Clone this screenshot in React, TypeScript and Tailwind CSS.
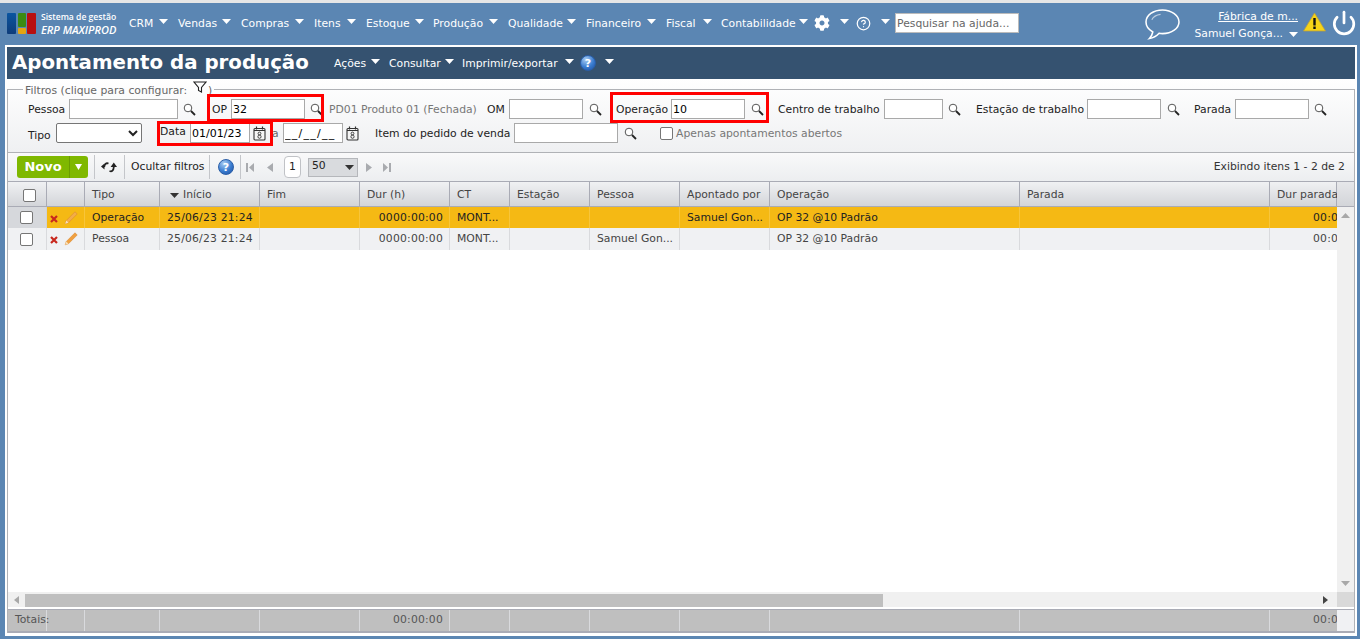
import React from "react";
import { FaCog } from "react-icons/fa";
import { CircleHelp, Power } from "lucide-react";

const Caret = ({ className = "" }: { className?: string }) => (
  <svg width="9" height="5" viewBox="0 0 9 5" className={"shrink-0 " + className}>
    <polygon points="0,0 9,0 4.5,5" fill="#ffffff" />
  </svg>
);

const Search = ({ className = "" }: { className?: string }) => (
  <svg width="13" height="13" viewBox="0 0 13 13" className={"shrink-0 " + className} fill="none">
    <circle cx="5" cy="5" r="3.8" stroke="#555" strokeWidth="1" fill="#fff" />
    <path d="M8 8l4 4" stroke="#222" strokeWidth="1.8" />
  </svg>
);

const Calendar = ({ className = "" }: { className?: string }) => (
  <svg width="13" height="15" viewBox="0 0 13 15" className={"shrink-0 " + className} fill="none">
    <rect x="1" y="2.5" width="11" height="11.5" rx="1" stroke="#333" strokeWidth="1.1" fill="#f5f5f5" />
    <path d="M3.5 0.5v3M9.5 0.5v3" stroke="#333" strokeWidth="1.2" />
    <path d="M1 4.5h11" stroke="#333" />
    <circle cx="6.5" cy="7.5" r="1.4" stroke="#333" strokeWidth="0.9" />
    <circle cx="6.5" cy="10.7" r="1.6" stroke="#333" strokeWidth="0.9" />
  </svg>
);

const HelpBlue = ({ className = "" }: { className?: string }) => (
  <span className={"flex h-4 w-4 shrink-0 items-center justify-center rounded-full border border-[#2a5ea8] bg-[radial-gradient(circle_at_35%_25%,#a9cdf3,#3a7cd0_55%,#1e4f9e)] text-[11px] font-bold leading-none text-white " + className}>
    ?
  </span>
);

const Input = ({ w, value = "" }: { w: string; value?: string }) => (
  <input
    readOnly
    value={value}
    className={"h-5 shrink-0 border border-[#a9a9a9] bg-white px-[1px] text-[11px] text-black outline-none " + w}
  />
);

const Red = ({ className }: { className: string }) => (
  <i className={"pointer-events-none absolute border-[3px] border-[#ff0000] " + className} />
);

const nav: [string, string][] = [
  ["CRM", "w-[49px] pr-[10px]"],
  ["Vendas", "w-[63px] pr-[10px]"],
  ["Compras", "w-[73px] pr-[10px]"],
  ["Itens", "w-[52px] pr-[10px]"],
  ["Estoque", "w-[67px] pr-[9px]"],
  ["Produção", "w-[75px] pr-[10px]"],
  ["Qualidade", "w-[78px] pr-[10px]"],
  ["Financeiro", "w-[80px] pr-[10px]"],
  ["Fiscal", "w-[55px] pr-[9px]"],
  ["Contabilidade", "w-[93px] pr-[6px]"],
];

type Col = { w: string; label: string };
const cols: Col[] = [
  { w: "w-[39px]", label: "" },
  { w: "w-[38px]", label: "" },
  { w: "w-[75px]", label: "Tipo" },
  { w: "w-[100px]", label: "Início" },
  { w: "w-[100px]", label: "Fim" },
  { w: "w-[90px]", label: "Dur (h)" },
  { w: "w-[60px]", label: "CT" },
  { w: "w-[80px]", label: "Estação" },
  { w: "w-[90px]", label: "Pessoa" },
  { w: "w-[90px]", label: "Apontado por" },
  { w: "w-[250px]", label: "Operação" },
  { w: "w-[250px]", label: "Parada" },
  { w: "w-[67px]", label: "Dur parada" },
];

const Check = ({ className = "" }: { className?: string }) => (
  <span className={"block h-[13px] w-[13px] shrink-0 rounded-[2px] border border-[#767676] bg-white " + className} />
);

const XIcon = () => (
  <svg width="8" height="8" viewBox="0 0 8 8" className="mt-[2px] shrink-0">
    <path d="M1 1l6 6M7 1l-6 6" stroke="#c8281e" strokeWidth="2.2" />
  </svg>
);

const Pencil = ({ faded = false }: { faded?: boolean }) => (
  <svg width="14" height="14" viewBox="0 0 14 14" className="ml-[6px] shrink-0">
    <path d="M11 0.8l2.200 2.200-8.700 8.700-3.300 1.100 1.100-3.300z" fill={faded ? "#f3ad48" : "#f0a040"} stroke="#dc8a30" strokeWidth="0.6" />
    <path d="M1.200 12.800l1.100-3.300 2.200 2.200z" fill="#f6e0b8" />
  </svg>
);

const Row = ({ sel, tipo, pessoa, apont }: { sel: boolean; tipo: string; pessoa: string; apont: string }) => {
  const cell = "h-full shrink-0 overflow-hidden whitespace-nowrap border-r " + (sel ? "border-[#f8c53a]" : "border-[#d9dadd]");
  return (
    <div className={"flex items-center leading-[21px] " + (sel ? "h-[21px] bg-[#f5b914] text-[#222]" : "h-[22px] bg-[#f0f1f3] text-[#444]")}>
      <div className={"flex h-full w-[39px] shrink-0 items-center pl-[12px] border-r " + (sel ? "border-[#d0d2d6] bg-[#d6d8dc]" : "border-[#d9dadd] bg-[#f0f1f3]")}>
        <Check />
      </div>
      <div className={"flex w-[38px] items-center pl-[3px] " + cell}>
        <XIcon />
        <Pencil faded={sel} />
      </div>
      <div className={"w-[75px] pl-[7px] " + cell}>{tipo}</div>
      <div className={"w-[100px] pl-[7px] tracking-[0.2px] " + cell}>25/06/23 21:24</div>
      <div className={"w-[100px] " + cell} />
      <div className={"w-[90px] pr-[6px] text-right tracking-[0.2px] " + cell}>0000:00:00</div>
      <div className={"w-[60px] pl-[7px] " + cell}>MONT...</div>
      <div className={"w-[80px] " + cell} />
      <div className={"w-[90px] pl-[7px] " + cell}>{pessoa}</div>
      <div className={"w-[90px] pl-[7px] " + cell}>{apont}</div>
      <div className={"w-[250px] pl-[7px] " + cell}>OP 32 @10 Padrão</div>
      <div className={"w-[250px] " + cell} />
      <div className="h-full w-[67px] shrink-0 overflow-hidden whitespace-nowrap pl-[43px] tracking-[0.2px]">00:00:00</div>
    </div>
  );
};

export default function App() {
  return (
    <div className="flex h-[639px] w-full flex-col overflow-hidden bg-[#5b86b3] text-[10.8px] text-[#222] [font-family:'DejaVu_Sans',sans-serif]">
      <div className="h-[3px] shrink-0 bg-[#e6e6e6]" />
      {/* Top bar */}
      <header className="flex h-[42px] shrink-0 items-center pb-[2px] text-white">
        <div className="ml-[7px] flex h-[21px] shrink-0">
          <div className="w-[9px] rounded-[1px] bg-gradient-to-b from-[#0a55a0] to-[#0e3c7a]" />
          <div className="ml-[2px] flex w-[8px] flex-col gap-[1px]">
            <div className="flex-1 rounded-[1px] bg-[#3c8a12]" />
            <div className="h-[6px] rounded-[1px] bg-[#e4a412]" />
          </div>
          <div className="ml-[1px] w-[9px] rounded-[1px] bg-[#b80f0f]" />
        </div>
        <div className="ml-[5px] w-[88px] shrink-0 leading-none">
          <div className="whitespace-nowrap text-[8.6px] leading-[12px] font-semibold [font-family:'Open_Sans',sans-serif]">Sistema de gestão</div>
          <div className="whitespace-nowrap text-[11px] leading-[13px] font-semibold italic [font-family:'Open_Sans',sans-serif]">ERP MAXIPROD</div>
        </div>
        <div className="flex items-center">
          {nav.map(([t, m]) => (
            <div key={t} className={"flex shrink-0 items-center justify-between " + m}>
              <span className="mt-[2px] whitespace-nowrap">{t}</span>
              <Caret className="-mt-[3px]" />
            </div>
          ))}
        </div>
        <FaCog size={16} className="shrink-0" />
        <Caret className="ml-[10px] -mt-[3px]" />
        <CircleHelp size={15} strokeWidth={2} className="ml-[7px] shrink-0" />
        <Caret className="ml-[10px] -mt-[3px]" />
        <input
          readOnly
          placeholder="Pesquisar na ajuda..."
          className="ml-[5px] h-[20px] w-[124px] shrink-0 border border-[#bbb] bg-white pl-[1px] text-[10.8px] text-[#555] outline-none placeholder:text-[#666]"
        />
        <svg width="37" height="33" viewBox="0 0 38 34" fill="none" className="ml-[125px] mt-[2px] shrink-0">
          <path d="M19 2C9.5 2 2 7.5 2 14.5c0 4.5 3 8 7 10.2-.5 2.500-1.700 5-3.500 6.800 4-.6 7.500-2.700 10-5.400 1.100.2 2.300.3 3.500.3 9.500 0 17-5.500 17-12S28.500 2 19 2z" stroke="#fff" strokeWidth="1.600" />
          <path d="M8 12c1.500-3 5-5 9-5.500" stroke="#fff" strokeOpacity="0.6" strokeWidth="1.200" />
        </svg>
        <div className="ml-[14px] mt-[6px] flex w-[103px] shrink-0 flex-col items-end leading-none">
          <span className="whitespace-nowrap underline">Fábrica de m...</span>
          <div className="mt-[6px] flex items-center">
            <span className="whitespace-nowrap">Samuel Gonça...</span>
            <Caret className="ml-[6px]" />
          </div>
        </div>
        <svg width="23" height="20" viewBox="0 0 23 20" className="ml-[5px] -mt-[3px] shrink-0">
          <polygon points="11.500,1 22.500,19 0.500,19" fill="#f7d417" stroke="#b9a040" strokeWidth="0.800" />
          <rect x="10.300" y="6" width="2.400" height="7.500" fill="#111" />
          <rect x="10.300" y="14.500" width="2.400" height="2.500" fill="#111" />
        </svg>
        <Power size={26} strokeWidth={2.5} className="ml-[5px] -mt-[1px] shrink-0" />
      </header>

      {/* Page */}
      <main className="ml-[5px] mr-[3px] mb-[3px] flex min-h-0 flex-1 flex-col bg-white px-[2px] pt-[2px] pb-[3px]">
        <div className="flex h-[32px] shrink-0 items-center bg-[#355270] text-white">
          <h1 className="ml-[5px] w-[297px] shrink-0 whitespace-nowrap text-[19.8px] font-bold leading-none">Apontamento da produção</h1>
          <span className="ml-[25px] mt-[2px] w-[32px] shrink-0">Ações</span>
          <Caret className="ml-[5px] -mt-[3px]" />
          <span className="ml-[9px] mt-[2px] w-[51px] shrink-0">Consultar</span>
          <Caret className="ml-[5px] -mt-[3px]" />
          <span className="ml-[8px] mt-[2px] w-[98px] shrink-0 whitespace-nowrap">Imprimir/exportar</span>
          <Caret className="ml-[5px] -mt-[3px]" />
          <HelpBlue className="ml-[6px]" />
          <Caret className="ml-[9px] -mt-[3px]" />
        </div>

        {/* Filters */}
        <section className="h-[73px] shrink-0 bg-gradient-to-b from-white to-[#eff0f2]">
          <fieldset className="mt-[3px] h-[70px] border border-b-0 border-[#b0b2b6] pl-[20px]">
            <legend className="-ml-[5px] flex h-[14px] items-center px-[2px] text-[10.8px] leading-[14px] text-[#666]">
              <span className="w-[168px] translate-y-[2px] whitespace-nowrap">Filtros (clique para configurar:</span>
              <svg width="14" height="12" viewBox="0 0 14 12" fill="none" className="-translate-y-[2px] mr-[1px]">
                <path d="M1 1h12L8.500 6.500V11L5.500 9.500V6.500z" stroke="#222" strokeWidth="1.100" />
              </svg>
              <span className="translate-y-[2px]">)</span>
            </legend>
            <div className="mt-[3px] flex h-5 items-center whitespace-nowrap [&_span]:mt-[3px]">
              <span className="w-[41px] shrink-0">Pessoa</span>
              <Input w="w-[109px]" />
              <Search className="ml-[5px]" />
              <div className="relative ml-[16px] flex items-center">
                <Red className="-top-[5px] -bottom-[3px] -left-[5px] -right-[1px]" />
                <span className="w-[19px] shrink-0">OP</span>
                <Input w="w-[74px]" value="32" />
                <Search className="ml-[5px]" />
              </div>
              <span className="ml-[6px] w-[158px] shrink-0 text-[#777]">PD01 Produto 01 (Fechada)</span>
              <span className="w-[22px] shrink-0">OM</span>
              <Input w="w-[74px]" />
              <Search className="ml-[6px]" />
              <div className="relative ml-[14px] flex items-center">
                <Red className="-top-[7px] -bottom-[4px] -left-[6px] -right-[5px]" />
                <span className="w-[55px] shrink-0">Operação</span>
                <Input w="w-[74px]" value="10" />
                <Search className="ml-[6px]" />
              </div>
              <span className="ml-[14px] w-[106px] shrink-0">Centro de trabalho</span>
              <Input w="w-[59px]" />
              <Search className="ml-[5px]" />
              <span className="ml-[15px] w-[111px] shrink-0">Estação de trabalho</span>
              <Input w="w-[74px]" />
              <Search className="ml-[6px]" />
              <span className="ml-[14px] w-[41px] shrink-0">Parada</span>
              <Input w="w-[74px]" />
              <Search className="ml-[5px]" />
            </div>
            <div className="mt-[4px] flex h-5 items-center whitespace-nowrap">
              <span className="mt-[6px] w-[28px] shrink-0">Tipo</span>
              <select className="h-5 w-[86px] shrink-0 rounded-[2px] border border-[#767676] bg-white text-[11px]" />
              <div className="relative ml-[18px] flex items-center">
                <Red className="-top-[2px] -bottom-[3px] -left-[3px] -right-[7px]" />
                <span className="-mt-[1px] w-[30px] shrink-0">Data</span>
                <Input w="w-[60px]" value="01/01/23" />
                <Calendar className="ml-[3px]" />
              </div>
              <span className="ml-[6px] mt-[2px] w-[11px] shrink-0 text-[#666]">a</span>
              <Input w="w-[60px] tracking-[1.25px]" value="__/__/__" />
              <Calendar className="ml-[3px]" />
              <span className="ml-[16px] mt-[2px] w-[139px] shrink-0">Item do pedido de venda</span>
              <Input w="w-[104px]" />
              <Search className="ml-[6px]" />
              <Check className="ml-[23px]" />
              <span className="ml-[3px] mt-[2px] text-[#777]">Apenas apontamentos abertos</span>
            </div>
          </fieldset>
        </section>

        {/* Grid */}
        <section className="flex min-h-0 flex-1 flex-col border border-b-0 border-[#b0b2b6]">
          <div className="flex h-[28px] shrink-0 items-center bg-gradient-to-b from-[#f9f9fa] to-[#eceef0] text-[#222]">
            <div className="ml-[9px] flex h-[22px] w-[71px] shrink-0 items-center rounded-[3px] bg-[#7fb800] text-white">
              <span className="w-[52px] text-center text-[13px] font-bold">Novo</span>
              <span className="h-full w-px bg-[#6b9c00]" />
              <svg width="7" height="6" viewBox="0 0 7 6" className="ml-[5px]"><polygon points="0,0 7,0 3.500,6" fill="#fff" /></svg>
            </div>
            <span className="ml-[6px] h-[24px] w-px shrink-0 bg-[#c4c6ca]" />
            <svg width="16" height="13" viewBox="0 0 16 13" fill="none" className="ml-[6px] shrink-0">
              <path d="M7.500 2.500C5 1.500 3.500 3.500 3.200 6" stroke="#222" strokeWidth="1.800" />
              <polygon points="0,5.500 3.500,2.500 3.500,8.500" fill="#222" />
              <path d="M8.500 10c2.500 1 4-.5 4.300-4" stroke="#222" strokeWidth="1.800" />
              <polygon points="12.800,1.500 16,6 9.600,6" fill="#222" />
            </svg>
            <span className="ml-[7px] h-[24px] w-px shrink-0 bg-[#c4c6ca]" />
            <span className="ml-[6px] w-[73px] shrink-0 whitespace-nowrap">Ocultar filtros</span>
            <span className="ml-[5px] h-[24px] w-px shrink-0 bg-[#c4c6ca]" />
            <HelpBlue className="ml-[8px]" />
            <span className="ml-[6px] h-[24px] w-px shrink-0 bg-[#c4c6ca]" />
            <svg width="8" height="9" viewBox="0 0 8 9" className="ml-[5px] shrink-0" fill="#a9abaf"><rect width="2" height="9" /><polygon points="8,0 8,9 3,4.500" /></svg>
            <svg width="6" height="9" viewBox="0 0 6 9" className="ml-[13px] shrink-0" fill="#a9abaf"><polygon points="6,0 6,9 0,4.500" /></svg>
            <span className="ml-[11px] flex h-[22px] w-[17px] shrink-0 items-center justify-center rounded-[4px] border border-[#c0c2c6] bg-white pt-[1px]">1</span>
            <div className="ml-[7px] flex h-[19px] w-[50px] shrink-0 items-center justify-between border border-[#b5b7bb] bg-[#d9dbde] pl-[3px] pr-[3px]">
              <span className="-mt-[2px]">50</span>
              <svg width="9" height="5" viewBox="0 0 9 5"><polygon points="0,0 9,0 4.500,5" fill="#333" /></svg>
            </div>
            <svg width="6" height="9" viewBox="0 0 6 9" className="ml-[8px] shrink-0" fill="#a9abaf"><polygon points="0,0 0,9 6,4.500" /></svg>
            <svg width="8" height="9" viewBox="0 0 8 9" className="ml-[11px] shrink-0" fill="#a9abaf"><polygon points="0,0 0,9 5,4.500" /><rect x="6" width="2" height="9" /></svg>
            <span className="ml-auto mr-[9px] whitespace-nowrap text-[#333]">Exibindo itens 1 - 2 de 2</span>
          </div>

          <div className="flex h-[26px] shrink-0 border-y border-[#a9abb5] bg-gradient-to-b from-[#f0f1f3] to-[#d3d5d9] text-[#444]">
            {cols.map((c, i) => (
              <div key={i} className={"flex shrink-0 items-center whitespace-nowrap border-r border-[#a9abb5] pt-[2px] " + c.w + (i > 1 ? " pl-[7px]" : "")}>
                {i === 0 && <Check className="ml-[15px]" />}
                {c.label === "Início" && (
                  <svg width="9" height="5" viewBox="0 0 9 5" className="ml-[3px] mr-[4px]"><polygon points="0,0 9,0 4.500,5" fill="#333" /></svg>
                )}
                {c.label}
              </div>
            ))}
            <div className="min-w-0 flex-1 bg-gradient-to-b from-[#e6e7ea] to-[#d3d5d9]" />
          </div>

          <div className="flex min-h-0 flex-1">
            <div className="flex min-w-0 flex-1 flex-col">
              <Row sel tipo="Operação" pessoa="" apont="Samuel Gon..." />
              <Row sel={false} tipo="Pessoa" pessoa="Samuel Gon..." apont="" />
            </div>
            <div className="flex w-[17px] shrink-0 flex-col items-center justify-between bg-[#f0f0f0] py-[6px]">
              <svg width="9" height="5" viewBox="0 0 9 5"><polygon points="4.500,0 9,5 0,5" fill="#a8a8a8" /></svg>
              <svg width="9" height="5" viewBox="0 0 9 5"><polygon points="0,0 9,0 4.500,5" fill="#a8a8a8" /></svg>
            </div>
          </div>

          <div className="flex h-[15px] shrink-0 items-center bg-[#f0f0f0]">
            <svg width="5" height="8" viewBox="0 0 5 8" className="ml-[6px] shrink-0"><polygon points="5,0 5,8 0,4" fill="#a8a8a8" /></svg>
            <div className="ml-[6px] h-[13px] w-[858px] shrink-0 self-end bg-[#bfbfbf]" />
            <svg width="5" height="8" viewBox="0 0 5 8" className="ml-auto mr-[9px] shrink-0"><polygon points="0,0 0,8 5,4" fill="#444" /></svg>
            <div className="h-full w-[17px] shrink-0 bg-[#d9d9d9]" />
          </div>
          <div className="h-[2px] shrink-0 bg-white" />

          <div className="flex h-[24px] shrink-0 border-t border-b-[2px] border-t-[#a9abb5] border-b-[#a9abb5] bg-[#bfbfbf] text-[#555]">
            <div className="flex h-full w-[39px] shrink-0 items-center border-r border-[#d9dadd] pl-[7px]">Totais:</div>
            <div className="w-[38px] shrink-0 border-r border-[#d9dadd]" />
            <div className="w-[75px] shrink-0 border-r border-[#d9dadd]" />
            <div className="w-[100px] shrink-0 border-r border-[#d9dadd]" />
            <div className="w-[100px] shrink-0 border-r border-[#d9dadd]" />
            <div className="flex w-[90px] shrink-0 items-center justify-end border-r border-[#d9dadd] pr-[6px] tracking-[0.2px]">00:00:00</div>
            <div className="w-[60px] shrink-0 border-r border-[#d9dadd]" />
            <div className="w-[80px] shrink-0 border-r border-[#d9dadd]" />
            <div className="w-[90px] shrink-0 border-r border-[#d9dadd]" />
            <div className="w-[90px] shrink-0 border-r border-[#d9dadd]" />
            <div className="w-[250px] shrink-0 border-r border-[#d9dadd]" />
            <div className="w-[250px] shrink-0 border-r border-[#d9dadd]" />
            <div className="flex w-[67px] shrink-0 items-center overflow-hidden whitespace-nowrap pl-[43px] tracking-[0.2px]">00:00:00</div>
            <div className="w-[17px] shrink-0 bg-[#f0f1f3]" />
          </div>
        </section>
      </main>
    </div>
  );
}
